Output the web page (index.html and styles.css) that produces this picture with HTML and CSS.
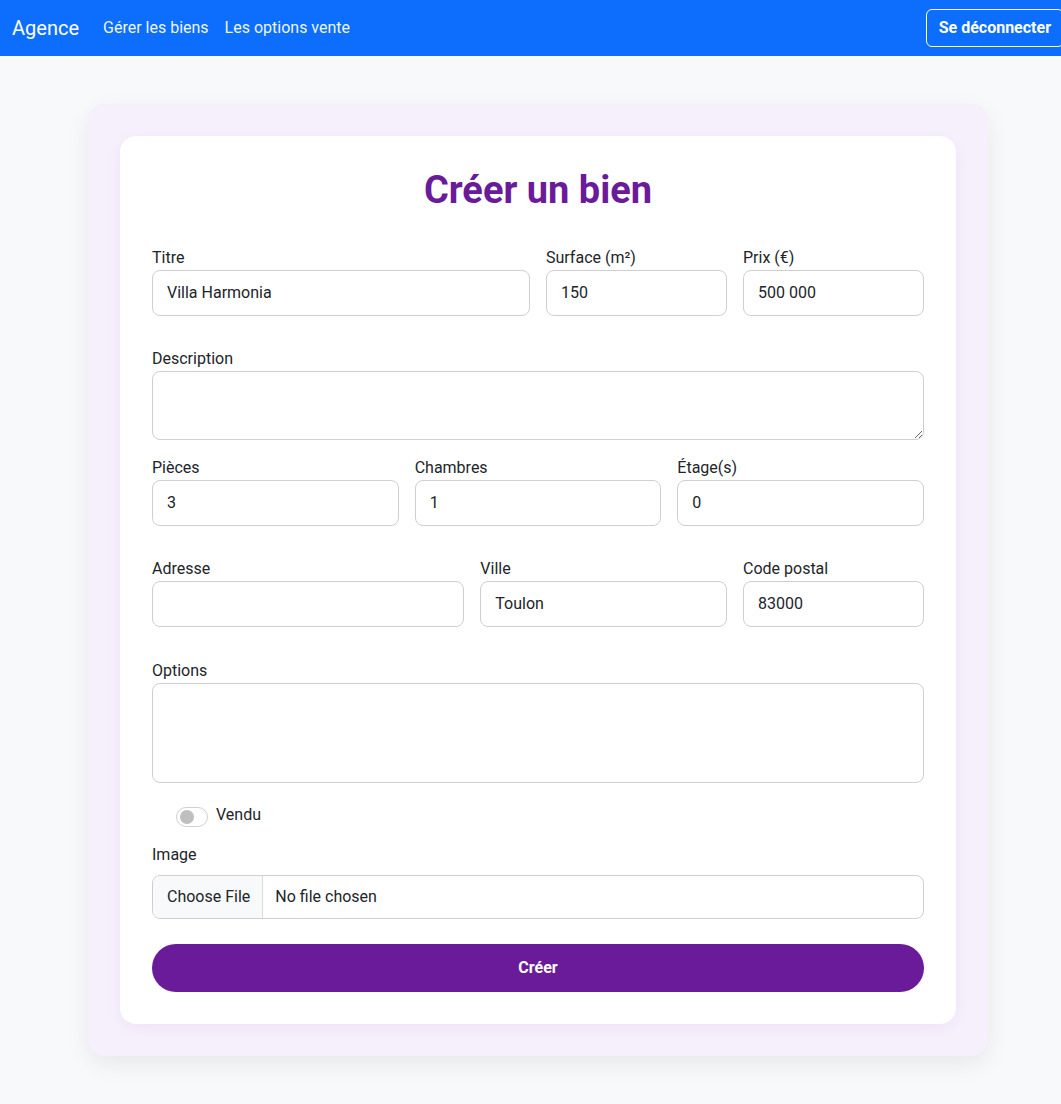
FILE: index.html
```html
<!DOCTYPE html>
<html lang="fr">
<head>
<meta charset="utf-8">
<title>Créer un bien</title>
<link rel="stylesheet" href="styles.css">
</head>
<body>
<nav class="navbar">
  <div class="nav-left">
    <a class="brand" href="#">Agence</a>
    <a class="nav-link" href="#">Gérer les biens</a>
    <a class="nav-link" href="#">Les options vente</a>
  </div>
  <button class="btn-logout" type="button">Se déconnecter</button>
</nav>
<main class="page">
  <div class="outer">
    <form class="card">
      <h1 class="title">Créer un bien</h1>
      <div class="grid row-gap-lg">
        <div class="field span-6"><label class="lbl">Titre</label><input class="ctl" type="text" value="Villa Harmonia"></div>
        <div class="field span-3"><label class="lbl">Surface (m²)</label><input class="ctl" type="text" value="150"></div>
        <div class="field span-3"><label class="lbl">Prix (€)</label><input class="ctl" type="text" value="500 000"></div>
      </div>
      <div class="field row-gap-sm"><label class="lbl">Description</label><textarea class="ctl area-desc"></textarea></div>
      <div class="grid row-gap-lg">
        <div class="field span-4"><label class="lbl">Pièces</label><input class="ctl" type="text" value="3"></div>
        <div class="field span-4"><label class="lbl">Chambres</label><input class="ctl" type="text" value="1"></div>
        <div class="field span-4"><label class="lbl">Étage(s)</label><input class="ctl" type="text" value="0"></div>
      </div>
      <div class="grid row-gap-lg2">
        <div class="field span-5"><label class="lbl">Adresse</label><input class="ctl" type="text" value=""></div>
        <div class="field span-4"><label class="lbl">Ville</label><input class="ctl" type="text" value="Toulon"></div>
        <div class="field span-3"><label class="lbl">Code postal</label><input class="ctl" type="text" value="83000"></div>
      </div>
      <div class="field"><label class="lbl">Options</label><textarea class="ctl area-opt"></textarea></div>
      <div class="switch-row">
        <span class="switch"><span class="knob"></span></span>
        <span class="switch-label">Vendu</span>
      </div>
      <div class="field file-field">
        <label class="lbl lbl-form">Image</label>
        <input class="ctl file" type="file">
      </div>
      <button class="btn-submit" type="button">Créer</button>
    </form>
  </div>
</main>
</body>
</html>
```
FILE: styles.css
```css
* { box-sizing: border-box; }
html, body { margin: 0; padding: 0; }
body {
  font-family: Roboto, "Liberation Sans", Arial, sans-serif;
  font-size: 16px;
  line-height: 1.5;
  color: #212529;
  background: #f8f9fa;
}
.navbar {
  height: 56px;
  background: #0d6efd;
  display: flex;
  align-items: center;
  justify-content: space-between;
  padding-left: 12px;
}
.nav-left { display: flex; align-items: center; }
.brand {
  color: #fff;
  font-size: 20px;
  line-height: 30px;
  text-decoration: none;
  margin-right: 16px;
}
.nav-link {
  color: rgba(255,255,255,0.95);
  text-decoration: none;
  padding: 8px;
}
.btn-logout {
  font-family: inherit;
  font-size: 16px;
  font-weight: 700;
  line-height: 24px;
  color: #fff;
  background: transparent;
  border: 1px solid #fff;
  border-radius: 6px;
  padding: 6px 12px;
  margin-right: -3px;
}
.page {
  padding: 48px 0 48px 15px;
}
.outer {
  max-width: 900px;
  margin: 0 auto;
  background: #f6effc;
  border-radius: 16px;
  padding: 32px;
  box-shadow: 0 8px 24px rgba(0,0,0,0.07);
}
.card {
  background: #fff;
  border-radius: 16px;
  padding: 32px;
  box-shadow: 0 4px 14px rgba(106,27,154,0.05);
}
.title {
  margin: -1px 0 32px;
  text-align: center;
  color: #6a1b9a;
  font-size: 38px;
  line-height: 46px;
  font-weight: 700;
}
.grid {
  display: grid;
  grid-template-columns: repeat(12, 1fr);
  column-gap: 16px;
}
.span-3 { grid-column: span 3; }
.span-4 { grid-column: span 4; }
.span-5 { grid-column: span 5; }
.span-6 { grid-column: span 6; }
.row-gap-lg { margin-bottom: 30px; }
.row-gap-lg2 { margin-bottom: 31px; }
.row-gap-sm { margin-bottom: 15px; }
.field { display: flex; flex-direction: column; }
.lbl {
  display: block;
  line-height: 24px;
  padding-top: 1px;
  margin-bottom: 0;
}
.lbl-form { margin-bottom: 8px; }
.ctl {
  font-family: inherit;
  font-size: 16px;
  line-height: 24px;
  color: #212529;
  background: #fff;
  border: 1px solid #cfcfcf;
  border-radius: 8px;
  height: 46px;
  padding: 9px 14px 11px;
  width: 100%;
  outline: none;
}
.area-desc { height: 69px; resize: vertical; }
.area-opt { height: 100px; resize: none; }
.switch-row {
  display: flex;
  align-items: flex-start;
  margin-top: 19px;
  padding-left: 24px;
  line-height: 24px;
}
.switch {
  width: 32px;
  height: 20px;
  margin-top: 5px;
  border: 1px solid #d0d0d0;
  border-radius: 10px;
  background: #fff;
  display: flex;
  align-items: center;
  padding-left: 3px;
}
.knob {
  width: 14px;
  height: 14px;
  border-radius: 50%;
  background: #bfbfbf;
}
.switch-label { margin-left: 8px; padding-top: 1px; }
.file-field { margin-top: 15px; }
.file {
  height: 44px;
  padding: 0 14px;
  overflow: hidden;
}
.file::file-selector-button {
  font-family: inherit;
  font-size: 16px;
  color: #212529;
  background: #f8f9fa;
  border: 0;
  border-right: 1px solid #dcdcdc;
  border-radius: 0;
  height: 42px;
  padding: 0 12px 2px 14px;
  margin: 0 12px 0 -14px;
}
.btn-submit {
  display: block;
  width: 100%;
  margin-top: 25px;
  height: 48px;
  border: 0;
  border-radius: 24px;
  background: #6a1b9a;
  color: #fff;
  font-family: inherit;
  font-size: 16px;
  font-weight: 700;
  padding: 0 0 2px;
}
```
